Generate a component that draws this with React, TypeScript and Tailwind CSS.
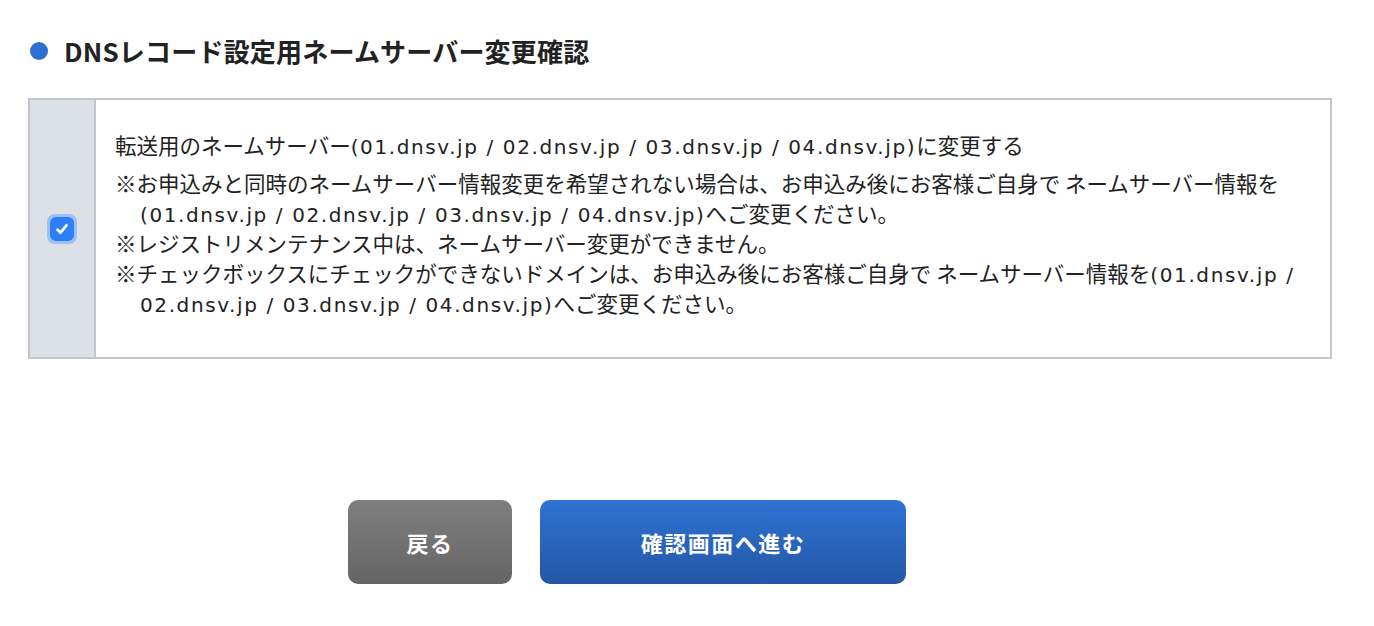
const jp = { fontFamily: '"Noto Sans CJK JP", "Noto Sans", sans-serif' };

const NS1 = "(01.dnsv.jp / 02.dnsv.jp / 03.dnsv.jp / 04.dnsv.jp)";

function Latin({ children }: { children: string }) {
  return <span className="font-['DejaVu_Sans'] text-[20px] leading-none tracking-[1.6px]">{children}</span>;
}

export default function App() {
  return (
    <div className="min-h-[626px] w-[1374px] bg-white text-[#222]" style={jp}>
      <div className="px-[28px] pt-[32px]">
        <h2 className="flex items-center gap-[16px] pl-[2px] text-[26px] font-bold leading-[38px] tracking-[0.2px]">
          <span className="size-[18px] shrink-0 rounded-full bg-[#2e6fd6]" />
          DNSレコード設定用ネームサーバー変更確認
        </h2>

        <div className="mt-[28px] flex w-[1304px] border-2 border-[#c2c5c9]">
          <div className="flex w-[66px] shrink-0 items-center justify-center border-r-2 border-[#c2c5c9] bg-[#dce0e7]">
            <label className="flex size-[30px] items-center justify-center rounded-[8px] bg-[#9cc0f7]">
              <span className="flex size-[24px] items-center justify-center rounded-[6px] bg-[#2d7ff9]">
                <svg viewBox="0 0 16 16" className="size-[18px]" fill="none" stroke="white" strokeWidth="2.4" strokeLinecap="round" strokeLinejoin="round">
                  <path d="M4 8.6l2.7 2.7 5.3-6.6" />
                </svg>
              </span>
            </label>
          </div>
          <div className="flex-1 whitespace-nowrap pb-[39px] pl-[19px] pr-[20px] pt-[30px] text-[21.5px] leading-[30px]">
            <p className="mb-[8px]">
              転送用のネームサーバー<Latin>{NS1}</Latin>に変更する
            </p>
            <p>
              ※お申込みと同時のネームサーバー情報変更を希望されない場合は、お申込み後にお客様ご自身で ネームサーバー情報を
            </p>
            <p className="pl-[25px]">
              <Latin>{NS1}</Latin>へご変更ください。
            </p>
            <p>※レジストリメンテナンス中は、ネームサーバー変更ができません。</p>
            <p>
              ※チェックボックスにチェックができないドメインは、お申込み後にお客様ご自身で ネームサーバー情報を<Latin>(01.dnsv.jp /</Latin>
            </p>
            <p className="pl-[25px]">
              <Latin>02.dnsv.jp / 03.dnsv.jp / 04.dnsv.jp)</Latin>へご変更ください。
            </p>
          </div>
        </div>
      </div>

      <div className="mt-[141px] flex gap-[28px] pl-[348px]">
        <button className="h-[84px] w-[164px] rounded-[10px] bg-gradient-to-b from-[#7f7f7f] to-[#656565] text-[22px] font-bold tracking-[1.5px] text-white">
          戻る
        </button>
        <button className="h-[84px] w-[366px] rounded-[10px] bg-gradient-to-b from-[#2e73d4] to-[#2457a5] text-[22px] font-bold tracking-[1.5px] text-white">
          確認画面へ進む
        </button>
      </div>
    </div>
  );
}
